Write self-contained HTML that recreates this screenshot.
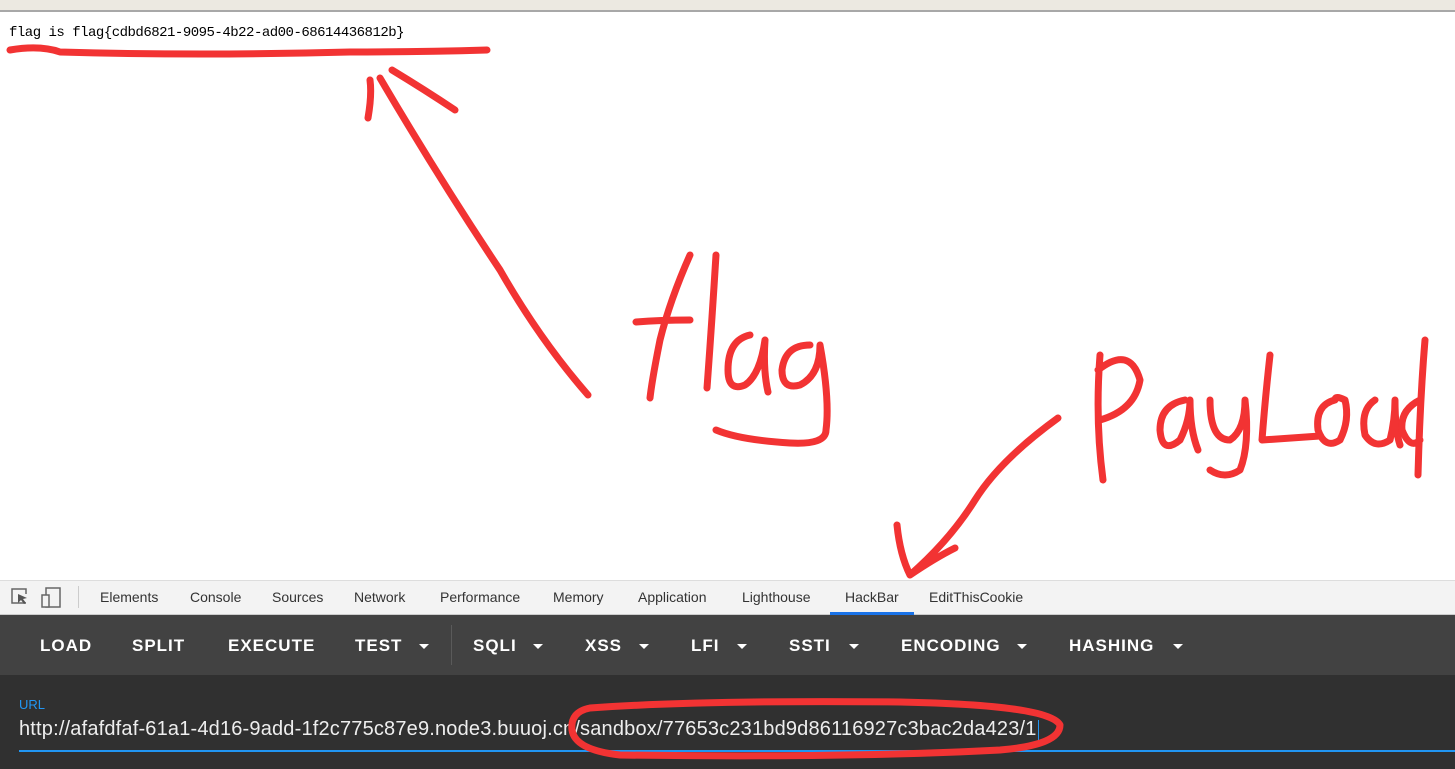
<!DOCTYPE html>
<html><head><meta charset="utf-8"><style>
*{margin:0;padding:0;box-sizing:border-box}
body{width:1455px;height:769px;overflow:hidden;background:#fff;position:relative;font-family:"Liberation Sans",sans-serif}
.a{position:absolute;white-space:nowrap}
#top{left:0;top:0;width:1455px;height:12px;background:#ece9e1;border-bottom:2px solid #a8a8a8}
#tabs{left:0;top:580px;width:1455px;height:35px;background:#f3f3f3;border-top:1px solid #ddd;border-bottom:1px solid #ccc}
.t{top:589px;font-size:14px;color:#333}
#hb{left:0;top:615px;width:1455px;height:60px;background:#424242}
.b{top:636px;font-size:17px;font-weight:bold;color:#fff;letter-spacing:1px}
.c{top:644px;width:0;height:0;border-left:5px solid transparent;border-right:5px solid transparent;border-top:5px solid #fff}
#bot{left:0;top:675px;width:1455px;height:94px;background:#303030}
</style></head><body>
<div class="a" id="top"></div>
<div class="a" style="left:9px;top:25px;font-family:'Liberation Mono',monospace;font-size:14px;color:#000;letter-spacing:-0.5px">flag is flag{cdbd6821-9095-4b22-ad00-68614436812b}</div>
<div class="a" id="tabs"></div>
<svg class="a" style="left:10px;top:587px" width="60" height="22"><path d="M16 16H2V2h14v5" fill="none" stroke="#666" stroke-width="1.5"/><path d="M8 7l9 4-4 1 3 4-2 1-3-4-3 3z" fill="#555"/><rect x="36" y="1" width="14" height="19" fill="none" stroke="#666" stroke-width="1.5"/><rect x="32" y="8" width="7" height="12" fill="#f3f3f3" stroke="#666" stroke-width="1.5"/></svg>
<div class="a" style="left:78px;top:586px;width:1px;height:22px;background:#ccc"></div>
<div class="a t" style="left:100px">Elements</div>
<div class="a t" style="left:190px">Console</div>
<div class="a t" style="left:272px">Sources</div>
<div class="a t" style="left:354px">Network</div>
<div class="a t" style="left:440px">Performance</div>
<div class="a t" style="left:553px">Memory</div>
<div class="a t" style="left:638px">Application</div>
<div class="a t" style="left:742px">Lighthouse</div>
<div class="a t" style="left:845px">HackBar</div>
<div class="a" style="left:830px;top:612px;width:84px;height:3px;background:#1a73e8"></div>
<div class="a t" style="left:929px">EditThisCookie</div>
<div class="a" id="hb"></div>
<div class="a b" style="left:40px">LOAD</div>
<div class="a b" style="left:132px">SPLIT</div>
<div class="a b" style="left:228px">EXECUTE</div>
<div class="a b" style="left:355px">TEST</div><div class="a c" style="left:419px"></div>
<div class="a" style="left:451px;top:625px;width:1px;height:40px;background:#5a5a5a"></div>
<div class="a b" style="left:473px">SQLI</div><div class="a c" style="left:533px"></div>
<div class="a b" style="left:585px">XSS</div><div class="a c" style="left:639px"></div>
<div class="a b" style="left:691px">LFI</div><div class="a c" style="left:737px"></div>
<div class="a b" style="left:789px">SSTI</div><div class="a c" style="left:849px"></div>
<div class="a b" style="left:901px">ENCODING</div><div class="a c" style="left:1017px"></div>
<div class="a b" style="left:1069px">HASHING</div><div class="a c" style="left:1173px"></div>
<div class="a" id="bot"></div>
<div class="a" style="left:19px;top:697px;font-size:13px;color:#2196f3">URL</div>
<div class="a" style="left:19px;top:718px;font-size:20px;letter-spacing:0.18px;color:#eee">http://afafdfaf-61a1-4d16-9add-1f2c775c87e9.node3.buuoj.cn/sandbox/77653c231bd9d86116927c3bac2da423/1</div>
<div class="a" style="left:1038px;top:720px;width:1px;height:22px;background:#2196f3"></div>
<div class="a" style="left:19px;top:750px;width:1436px;height:2px;background:#2196f3"></div>
<svg class="a" style="left:0;top:0" width="1455" height="769" fill="none" stroke="#f23333" stroke-width="7" stroke-linecap="round" stroke-linejoin="round">
<path d="M10 50Q40 45 60 52Q200 56 350 52Q420 52 487 50"/>
<path d="M588 395Q540 340 500 270Q440 180 380 78M368 118Q372 95 370 80M392 70Q425 90 455 110"/>
<path d="M690 255Q670 300 660 340Q652 380 650 398M636 322Q660 320 690 320"/>
<path d="M716 255Q712 320 707 388"/>
<path d="M750 335Q728 340 728 370Q728 392 745 385Q760 375 765 340Q763 370 768 392"/>
<path d="M810 345Q785 345 782 370Q782 390 800 385Q820 375 820 345Q830 400 826 430Q826 445 790 443Q740 440 716 430"/>
<path d="M1058 418Q1000 460 975 500Q950 540 910 575M897 525Q900 555 910 575M910 575Q935 558 955 548"/>
<path d="M1100 355Q1095 420 1103 480M1098 370Q1130 345 1140 380Q1135 410 1100 420"/>
<path d="M1185 400Q1160 405 1160 430Q1162 455 1180 440Q1190 420 1190 400Q1190 430 1198 450"/>
<path d="M1210 400Q1210 440 1230 440Q1245 430 1245 400Q1250 445 1240 470Q1225 480 1210 470"/>
<path d="M1270 355Q1265 400 1262 440Q1290 438 1320 436"/>
<path d="M1335 400Q1315 405 1318 430Q1325 450 1340 440Q1350 420 1345 400Q1335 395 1335 400"/>
<path d="M1375 400Q1360 410 1365 435Q1375 450 1390 440Q1395 420 1395 400Q1395 430 1400 445"/>
<path d="M1420 400Q1400 410 1402 430Q1410 450 1420 440M1425 340Q1420 400 1418 475"/>
<path d="M590 708Q700 700 900 702Q1050 705 1060 725Q1060 745 1000 750Q850 758 620 755Q575 750 572 730Q570 712 590 708"/>
</svg>
</body></html>
